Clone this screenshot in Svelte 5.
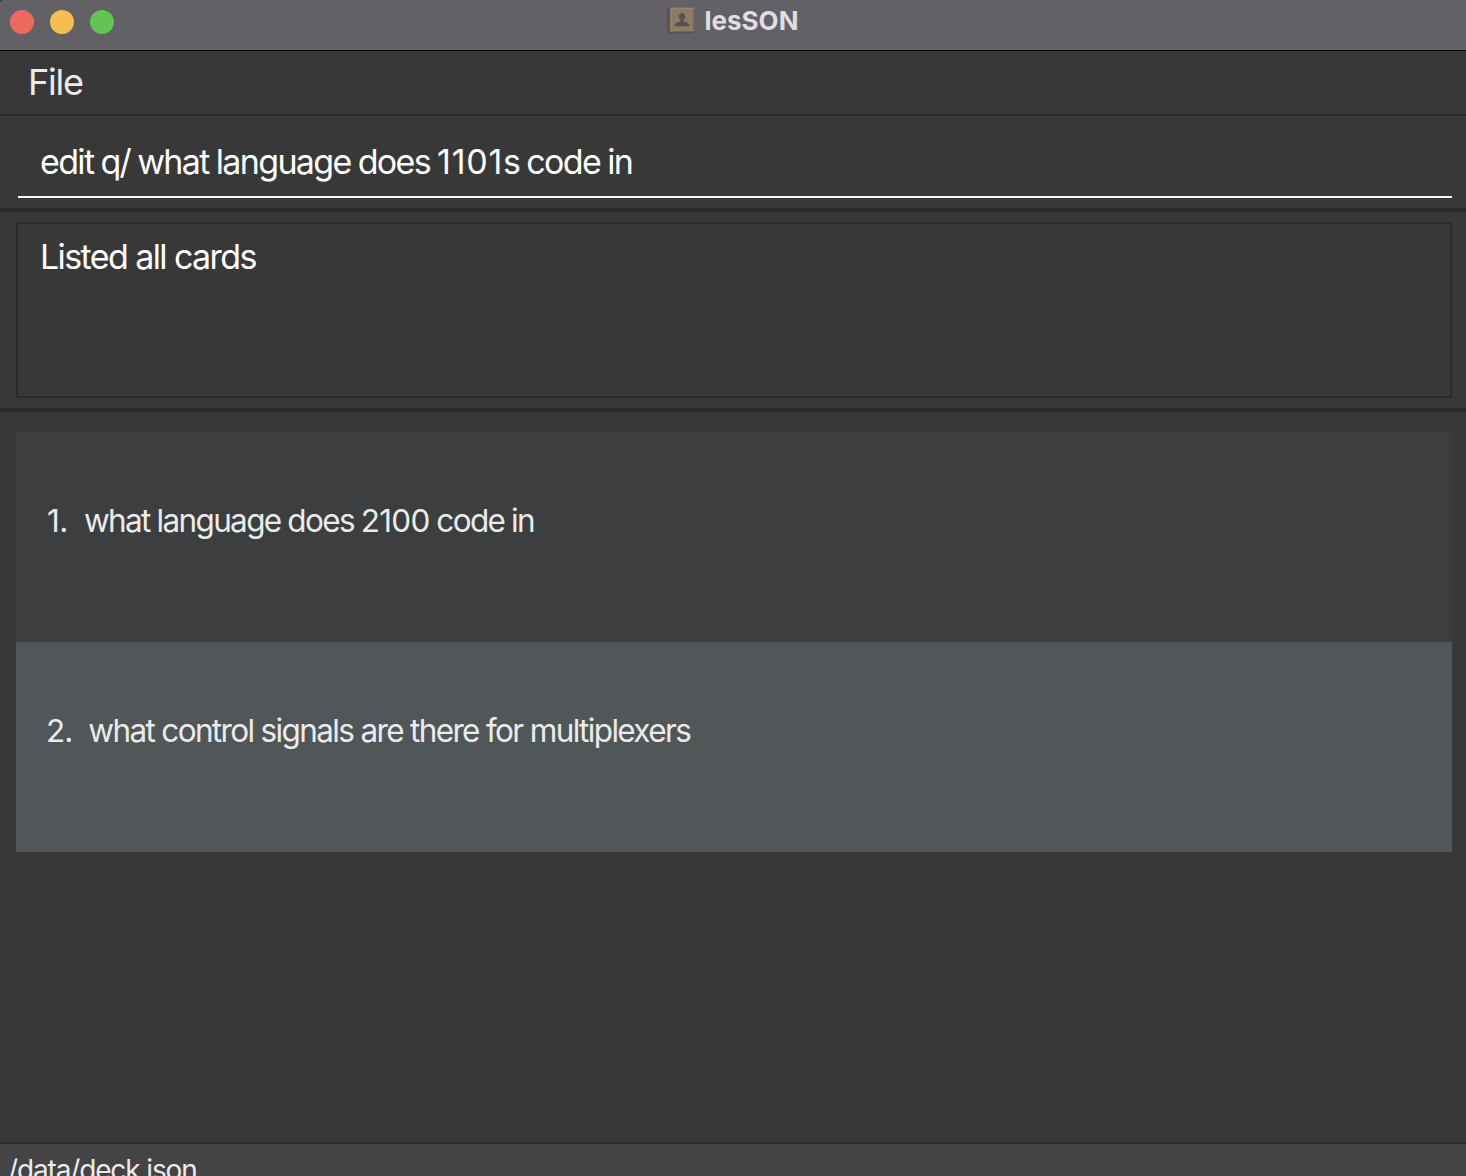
<script>
  const windowControls = ['close', 'minimise', 'zoom'];
  const command = 'edit q/ what language does 1101s code in';
  const result = 'Listed all cards';
  const cards = [
    'what language does 2100 code in',
    'what control signals are there for multiplexers',
  ];

  // Splits text into runs of digits and of everything else, so digits can be tracked separately.
  const runs = (text) => text.split(/(\d+)/).filter(Boolean);
</script>

{#snippet tracked(text)}{#each runs(text) as run}<span class:digits={/\d/.test(run)}>{run}</span>{/each}{/snippet}

<div class="window">
  <header class="titlebar">
    <div class="controls">
      {#each windowControls as name}
        <span class="control {name}"></span>
      {/each}
    </div>
    <div class="title">
      <svg class="book" width="30" height="30" viewBox="0 0 30 30">
        <defs>
          <linearGradient id="cover" x1="0" y1="0" x2="0" y2="1">
            <stop offset="0" stop-color="#8a7b6b" />
            <stop offset="1" stop-color="#8f7d5f" />
          </linearGradient>
        </defs>
        <rect x="2" y="2" width="27" height="25.5" rx="1.5" fill="#514b4b" opacity="0.6" />
        <rect x="2.3" y="1.800" width="4" height="24.500" fill="#5c5453" />
        <rect x="5.300" y="1.800" width="23.300" height="23.700" rx="0.8" fill="url(#cover)" />
        <rect x="5.300" y="1.800" width="23.300" height="1" fill="#9a8b78" />
        <rect x="5.300" y="1.800" width="1" height="23.700" fill="#988a78" />
        <path d="M17 7.300c-2.100 0-3.200 1.400-3.100 3.400.1 1.600.8 2.600 1.600 3.300.2 1-.2 1.600-1.400 2.100-2.300.8-4.300 1-4.500 4.100h14.800c-.2-3.100-2.200-3.300-4.500-4.100-1.200-.5-1.600-1.100-1.400-2.100.8-.7 1.500-1.700 1.600-3.300.1-2-1-3.400-3.100-3.400z" fill="#595150" />
      </svg>
      <span class="name">lesSON</span>
    </div>
  </header>

  <nav class="menubar"><span class="menu-item">File</span></nav>

  <section class="command-pane">
    <div class="command">{@render tracked(command)}</div>
  </section>

  <section class="result-pane">
    <div class="result"><span>{result}</span></div>
  </section>

  <main class="list-pane">
    <ol class="cards">
      {#each cards as question, i}
        <li class="card">
          <span class="number">{i + 1}.</span>
          <span class="question">{@render tracked(question)}</span>
        </li>
      {/each}
    </ol>
  </main>

  <footer class="status"><span>/data/deck.json</span></footer>
</div>

<style>
  :global(body) {
    margin: 0;
    overflow: hidden;
    background: #383838;
  }

  .window {
    box-sizing: border-box;
    display: flex;
    flex-direction: column;
    height: 1176px;
    overflow: hidden;
    background: #383838;
    color: #ebebeb;
    font-family: Inter, 'Liberation Sans', sans-serif;
    white-space: nowrap;
  }

  .titlebar {
    flex: none;
    display: grid;
    grid-template-columns: 1fr auto 1fr;
    height: 50px;
    border-bottom: 1px solid #000;
    border-top-left-radius: 4px;
    background: #636066;
  }

  .controls {
    display: flex;
    gap: 16px;
    padding: 10px 0 0 10px;
  }

  .control {
    width: 24px;
    height: 24px;
    border-radius: 50%;
  }

  .close { background: #ed6a5f; }
  .minimise { background: #f5bf4f; }
  .zoom { background: #61c554; }

  .title {
    display: flex;
    gap: 10px;
    padding-right: 3px;
  }

  .book {
    margin-top: 6px;
  }

  .name {
    color: #dfdde1;
    font-size: 26px;
    font-weight: 700;
    line-height: 41px;
  }

  .menubar {
    flex: none;
    height: 63px;
    padding-left: 28px;
    border-bottom: 2px solid #2a2a2a;
    font-size: 36px;
    line-height: 63px;
    letter-spacing: -1.2px;
  }

  .command-pane {
    flex: none;
    box-sizing: border-box;
    height: 96px;
    padding: 0 14px 0 18px;
    border-bottom: 4px solid #2a2a2a;
    color: #fff;
    font-size: 34px;
  }

  .command {
    padding: 11px 0 0 22px;
    height: 69px;
    border-bottom: 2px solid #fff;
    line-height: 69px;
    letter-spacing: -1.65px;
    word-spacing: -0.9px;
  }

  .command .digits {
    letter-spacing: 0.75px;
  }

  .result-pane {
    flex: none;
    box-sizing: border-box;
    height: 200px;
    padding: 10px 14px 10px 16px;
    border-bottom: 4px solid #2a2a2a;
  }

  .result {
    box-sizing: border-box;
    height: 176px;
    padding-left: 22px;
    border: 2px solid #2a2a2a;
    color: #fff;
    font-size: 34px;
    line-height: 65px;
    letter-spacing: -1.6px;
  }

  .list-pane {
    flex: 1;
    padding: 20px 14px 0 16px;
  }

  .cards {
    margin: 0;
    padding: 0;
    list-style: none;
  }

  .card {
    display: flex;
    gap: 16px;
    height: 210px;
    padding-left: 30px;
    background: #3c3e3f;
    font-size: 31.5px;
    line-height: 177px;
    letter-spacing: -1.65px;
  }

  .card:nth-child(even) {
    background: #515658;
  }

  .number {
    letter-spacing: -1px;
  }

  .card:first-child .number {
    padding-left: 1px;
    letter-spacing: -0.5px;
  }

  .card:first-child .question {
    word-spacing: -0.4px;
  }

  .card .digits {
    letter-spacing: -0.75px;
  }

  .status {
    flex: none;
    height: 32px;
    padding-left: 8px;
    border-top: 2px solid #2a2a2a;
    background: #444;
    font-size: 28px;
    line-height: 52px;
    letter-spacing: -1.15px;
  }
</style>
